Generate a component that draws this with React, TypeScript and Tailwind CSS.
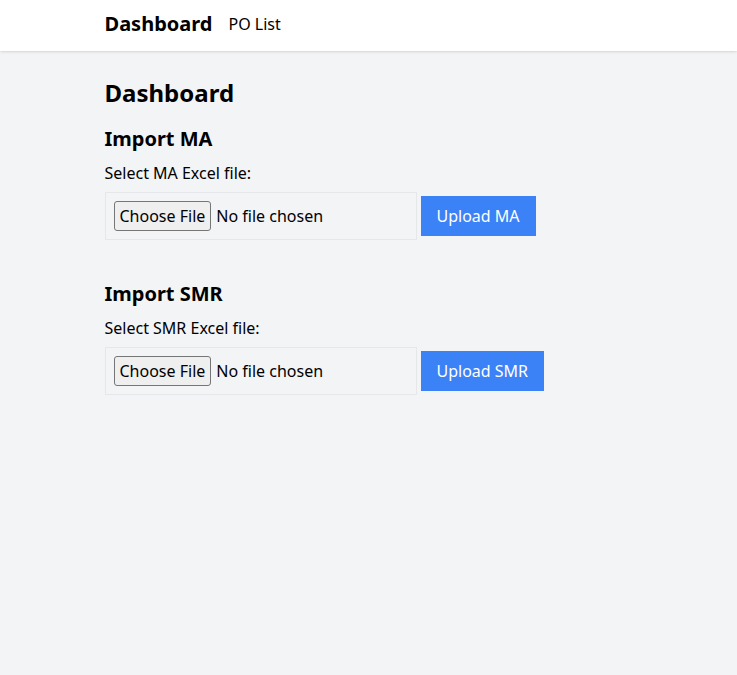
export default function App() {
  return (
    <div
      className="min-h-screen bg-gray-100 text-black"
      style={{ fontFamily: '"Noto Sans", "Open Sans", sans-serif' }}
    >
      <nav className="bg-white shadow">
        <div className="mx-auto flex h-[51px] max-w-xl items-center gap-4 px-6 pb-[4px]">
          <span className="text-xl font-bold">Dashboard</span>
          <a className="text-base">PO List</a>
        </div>
      </nav>

      <main className="mx-auto max-w-xl px-6 pb-6 pt-[26px]">
        <h1 className="mb-4 text-2xl font-bold">Dashboard</h1>

        <section className="mb-10">
          <h2 className="mb-2 text-xl font-bold">Import MA</h2>
          <label className="mb-[7px] block">Select MA Excel file:</label>
          <div className="flex items-center gap-1">
            <input
              type="file"
              className="w-[312px] border border-gray-200 p-2 file:mr-[5px] file:h-[30px] file:rounded-[3px] file:border file:border-[#767676] file:bg-[#efefef] file:px-[5px]"
            />
            <button className="bg-[#3b82f6] px-4 py-2 text-white">Upload MA</button>
          </div>
        </section>

        <section>
          <h2 className="mb-2 text-xl font-bold">Import SMR</h2>
          <label className="mb-[7px] block">Select SMR Excel file:</label>
          <div className="flex items-center gap-1">
            <input
              type="file"
              className="w-[312px] border border-gray-200 p-2 file:mr-[5px] file:h-[30px] file:rounded-[3px] file:border file:border-[#767676] file:bg-[#efefef] file:px-[5px]"
            />
            <button className="bg-[#3b82f6] px-4 py-2 text-white">Upload SMR</button>
          </div>
        </section>
      </main>
    </div>
  );
}
